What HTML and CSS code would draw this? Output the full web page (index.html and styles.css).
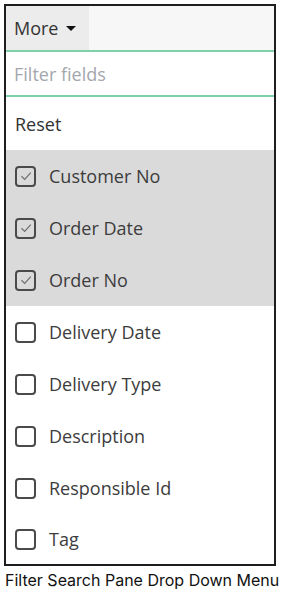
FILE: index.html
```html
<!DOCTYPE html>
<html lang="en">
<head>
  <meta charset="UTF-8" />
  <meta name="viewport" content="width=device-width, initial-scale=1.0" />
  <title>Filter Search Pane</title>
  <link rel="stylesheet" href="styles.css">
</head>
<body>
  <div class="pane">
    <div class="pane-head">
      <button class="more-btn">More <span class="caret"></span></button>
    </div>
    <div class="filter">
      <input type="text" placeholder="Filter fields" />
    </div>
    <div class="reset">Reset</div>

    <div class="field checked"><span class="box"><svg viewBox="0 0 12 12"><path d="M2.6 6.2 L5 8.6 L9.6 3.4" /></svg></span>Customer No</div>
    <div class="field checked"><span class="box"><svg viewBox="0 0 12 12"><path d="M2.6 6.2 L5 8.6 L9.6 3.4" /></svg></span>Order Date</div>
    <div class="field checked"><span class="box"><svg viewBox="0 0 12 12"><path d="M2.6 6.2 L5 8.6 L9.6 3.4" /></svg></span>Order No</div>
    <div class="field"><span class="box"></span>Delivery Date</div>
    <div class="field"><span class="box"></span>Delivery Type</div>
    <div class="field"><span class="box"></span>Description</div>
    <div class="field"><span class="box"></span>Responsible Id</div>
    <div class="field last"><span class="box"></span>Tag</div>
  </div>
  <p class="caption">Filter Search Pane Drop Down Menu</p>
</body>
</html>
```

FILE: styles.css
```css
body {
  margin: 0;
  background: #fff;
  font-family: "Open Sans", sans-serif;
  color: #3a3a3a;
}
.pane {
  box-sizing: border-box;
  width: 272px;
  margin: 4px 0 0 4px;
  border: 2px solid #1e1e1e;
}
.pane-head {
  height: 44px;
  background: #f7f7f7;
  border-bottom: 2px solid #7fd1a9;
  display: flex;
}
.more-btn {
  width: 83px;
  border: none;
  background: #ececec;
  font-family: "Open Sans", sans-serif;
  font-size: 18px;
  color: #333;
  text-align: left;
  padding: 0 0 0 8px;
  display: flex;
  align-items: center;
  gap: 8px;
}
.caret {
  width: 0;
  height: 0;
  border-left: 5px solid transparent;
  border-right: 5px solid transparent;
  border-top: 5px solid #111;
  margin-top: 1px;
}
.filter {
  height: 43px;
  border-bottom: 2px solid #7fd1a9;
  display: flex;
}
.filter input {
  flex: 1;
  border: none;
  outline: none;
  padding: 0 8px;
  font-family: "Open Sans", sans-serif;
  font-size: 18px;
  color: #333;
}
.filter input::placeholder {
  color: #a3a7ad;
}
.reset {
  height: 53px;
  display: flex;
  align-items: center;
  padding-left: 9px;
  font-size: 18px;
  color: #333;
}
.field {
  height: 52px;
  display: flex;
  align-items: center;
  padding-left: 9px;
  font-size: 18px;
  color: #3c3c3c;
}
.field.checked {
  background: #dadada;
}
.field.last {
  height: 50px;
}
.box {
  box-sizing: border-box;
  width: 21px;
  height: 21px;
  border: 2px solid #4a4a4a;
  border-radius: 4px;
  margin-right: 13px;
  display: flex;
  align-items: center;
  justify-content: center;
}
.box svg {
  width: 16px;
  height: 16px;
  fill: none;
  stroke: #6e6e6e;
  stroke-width: 0.9;
}
.caption {
  margin: 4px 0 0 5px;
  font-family: Inter, sans-serif;
  font-size: 16px;
  color: #111;
}
```
